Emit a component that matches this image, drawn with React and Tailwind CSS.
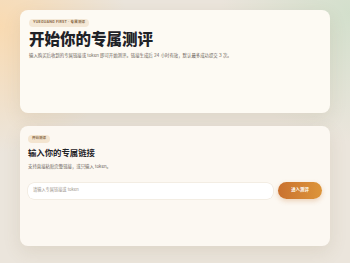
export default function App() {
  return (
    <div
      className="relative min-h-[263px] w-full overflow-hidden bg-[#ebe5dc] px-5 pt-2.5 pb-4 font-['Inter','Noto_Sans_CJK_SC',sans-serif]"
      style={{
        backgroundImage:
          "radial-gradient(circle at 0% 10%, rgba(255,214,160,0.7), rgba(255,214,160,0) 30%), radial-gradient(circle at 100% 5%, rgba(205,222,200,0.8), rgba(205,222,200,0) 30%)",
      }}
    >
      <section className="h-[103px] rounded-[8px] bg-[#fdfaf3] px-[9px] pt-[9px] shadow-[0_6px_18px_rgba(120,95,60,0.12)]">
        <div className="flex h-[8px] w-fit items-center rounded-full bg-[#f4e8d6] px-[4px] text-[3.5px] leading-none font-bold uppercase tracking-[0.06em] text-[#8a6a48]">
          YUEGUANG FIRST · 专属测评
        </div>
        <h1 className="mt-[3px] text-[15.5px] font-black leading-[19px] text-[#1f2227]">开始你的专属测评</h1>
        <p className="mt-[4px] text-[4.4px] leading-[6px] text-[#6b635a]">
          输入购买后收到的专属链接或 token 即可开始测评。链接生成后 24 小时有效，默认最多成功提交 3 次。
        </p>
      </section>

      <section className="mt-[13px] h-[120px] rounded-[8px] bg-[#fcf8f2] px-[8px] pt-[9px] shadow-[0_6px_18px_rgba(120,95,60,0.12)]">
        <div className="flex h-[8px] w-fit items-center rounded-full bg-[#f4e5d0] px-[4px] text-[3.5px] leading-none font-bold text-[#8a6a48]">
          开始测评
        </div>
        <h2 className="mt-[5px] text-[8.4px] font-bold leading-[11px] text-[#1f2227]">输入你的专属链接</h2>
        <p className="mt-[5px] text-[4.4px] leading-[6px] text-[#6b635a]">支持直接粘贴完整链接，或只输入 token。</p>
        <div className="mt-[12px] flex items-center gap-[5px]">
          <div className="flex h-[16px] flex-1 items-center rounded-[6px] bg-white px-[5px] text-[4.2px] text-[#9a9189] shadow-[0_0_0_0.5px_rgba(230,220,205,0.8)]">
            请输入专属链接或 token
          </div>
          <button className="h-[17px] w-[44px] rounded-full bg-gradient-to-r from-[#c9712f] to-[#dd953a] text-[4.4px] font-bold text-white shadow-[0_2px_5px_rgba(200,120,50,0.3)]">
            进入测评
          </button>
        </div>
      </section>
    </div>
  );
}
